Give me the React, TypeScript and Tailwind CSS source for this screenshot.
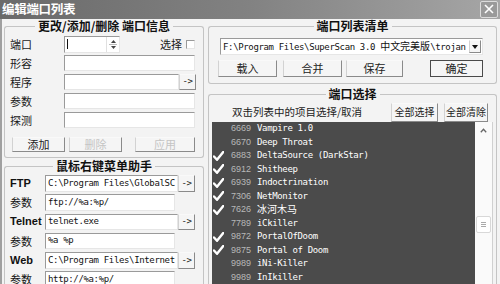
import React from "react";

const sunken =
  "bg-white border border-t-[#9a9a9a] border-l-[#9a9a9a] border-r-[#e6e6e6] border-b-[#e6e6e6]";
const raised =
  "bg-[#f5f5f5] border border-t-[#f9f9f9] border-l-[#d2d2d2] border-r-[#8a8a8a] border-b-[#8a8a8a] flex items-center justify-center";
const mono = "font-['DejaVu_Sans_Mono','Noto_Sans_CJK_SC',monospace] text-[9px] tracking-[-0.35px]";
const cjk = "font-['Noto_Sans_CJK_SC',sans-serif]";

function GroupBox({
  title,
  className,
  bodyClass,
  children,
}: {
  title: string;
  className?: string;
  bodyClass?: string;
  children: React.ReactNode;
}) {
  return (
    <div className={className}>
      <div className="flex items-end h-[14px]">
        <div className="flex-1 h-[7px] border-l border-t border-[#c4c4c4] rounded-tl-[3px]" />
        <span className="px-[3px] text-[12px] font-bold leading-[14px] text-[#111] whitespace-nowrap">{title}</span>
        <div className="flex-1 h-[7px] border-r border-t border-[#c4c4c4] rounded-tr-[3px]" />
      </div>
      <div className={"border-l border-r border-b border-[#c4c4c4] rounded-b-[3px] " + (bodyClass || "")}>{children}</div>
    </div>
  );
}

function Arrow() {
  return (
    <div className={raised + " w-[17px] h-full " + mono + " text-[#222]"}>-&gt;</div>
  );
}

function Row({ label, children }: { label: string; children: React.ReactNode }) {
  return (
    <div className="flex items-center h-[16px]">
      <span className="w-[54px] text-[11px] leading-none text-[#1a1a1a]">{label}</span>
      {children}
    </div>
  );
}

function Check() {
  return (
    <svg width="11" height="10" viewBox="0 0 11 10">
      <path d="M1 5.5 L4 8.8 L10.2 1" fill="none" stroke="#fff" strokeWidth="2.4" strokeLinecap="round" strokeLinejoin="round" />
    </svg>
  );
}

const items: [string, string, boolean][] = [
  ["6669", "Vampire 1.0", false],
  ["6670", "Deep Throat", false],
  ["6883", "DeltaSource (DarkStar)", true],
  ["6912", "Shitheep", true],
  ["6939", "Indoctrination", true],
  ["7306", "NetMonitor", true],
  ["7626", "冰河木马", true],
  ["7789", "iCkiller", false],
  ["9872", "PortalOfDoom", true],
  ["9875", "Portal of Doom", true],
  ["9989", "iNi-Killer", false],
  ["9989", "InIkiller", false],
];

function HelperRow({ label, value, button, bold }: { label: string; value: string; button?: boolean; bold?: boolean }) {
  return (
    <div className="flex items-center h-[16.5px]">
      <span
        className={
          "w-[35px] leading-none text-[#111] " +
          (bold ? "font-['Liberation_Sans',sans-serif] font-bold text-[11px]" : "text-[11px]")
        }
      >
        {label}
      </span>
      <div className={sunken + " h-full flex items-center pl-[2px] overflow-hidden whitespace-nowrap " + (button ? "w-[133px]" : "w-[130px]")}>
        <span className={mono + " text-[#111]"}>{value}</span>
      </div>
      {button && <Arrow />}
    </div>
  );
}

export default function App() {
  return (
    <div className={"w-[500px] h-[284px] overflow-hidden bg-[#f3f3f3] flex flex-col " + cjk}>
      {/* title bar */}
      <div className="h-[19px] shrink-0 flex items-center justify-between bg-linear-to-r from-[#6a6a6a] via-[#828282] to-[#a6a6a6]">
        <span className="pl-[2px] text-[12.5px] font-bold text-white leading-none tracking-[-0.3px]">编辑端口列表</span>
        <div className="w-[18px] h-[17px] mr-[2px] mb-[1px] border border-[#dcdcdc] rounded-[2px] bg-[#9a9a9a] flex items-center justify-center">
          <svg width="10" height="10" viewBox="0 0 10 10">
            <path d="M1 1 L9 9 M9 1 L1 9" stroke="#fff" strokeWidth="1.6" />
          </svg>
        </div>
      </div>

      {/* body */}
      <div className="flex flex-1 border-l-2 border-[#a0a0a0] pl-[2px] gap-[4px]">
        {/* left column */}
        <div className="w-[200px] flex flex-col gap-[1px]">
          <GroupBox title="更改/添加/删除 端口信息" bodyClass="pt-[3px] pb-[5px] pl-[5px] pr-[7px] flex flex-col">
            <div className="flex flex-col gap-[3px]">
              <Row label="端口">
                <div className={sunken + " w-[56px] h-[17px] flex items-center"}>
                  <span className="ml-[2px] w-px h-[10px] bg-[#111]" />
                  <div className="ml-auto w-[13px] h-full flex flex-col items-center justify-center gap-[1px] border-l border-[#e0e0e0]">
                    <svg width="5" height="3" viewBox="0 0 5 3"><path d="M0 3 L2.5 0 L5 3 Z" fill="#444" /></svg>
                    <div className="w-[8px] h-px bg-[#bbb]" />
                    <svg width="5" height="3" viewBox="0 0 5 3"><path d="M0 0 L2.5 3 L5 0 Z" fill="#444" /></svg>
                  </div>
                </div>
                <span className="ml-[40px] text-[11px] leading-none text-[#1a1a1a]">选择</span>
                <div className="ml-[4px] w-[9px] h-[9px] bg-white border border-t-[#9a9a9a] border-l-[#9a9a9a] border-r-[#e6e6e6] border-b-[#e6e6e6]" />
              </Row>
              <Row label="形容">
                <div className={sunken + " w-[131px] h-full"} />
              </Row>
              <Row label="程序">
                <div className={sunken + " w-[115px] h-full"} />
                <Arrow />
              </Row>
              <Row label="参数">
                <div className={sunken + " w-[131px] h-full"} />
              </Row>
              <Row label="探测">
                <div className={sunken + " w-[131px] h-full"} />
              </Row>
            </div>
            <div className="flex mt-[9px] h-[15px] text-[11px] leading-none">
              <div className={raised + " ml-[2px] w-[53px] text-[#222]"}>添加</div>
              <div className={raised + " ml-[4px] w-[53px] text-[#c4c4c4]"}>删除</div>
              <div className={raised + " ml-[13px] w-[60px] text-[#c4c4c4]"}>应用</div>
            </div>
          </GroupBox>

          <GroupBox title="鼠标右键菜单助手" bodyClass="pt-[2px] pb-[4px] pl-[5px] pr-[7px] flex flex-col gap-[2.8px]">
            <HelperRow label="FTP" value="C:\Program Files\GlobalSC" button bold />
            <HelperRow label="参数" value="ftp://%a:%p/" />
            <HelperRow label="Telnet" value="telnet.exe" button bold />
            <HelperRow label="参数" value="%a %p" />
            <HelperRow label="Web" value="C:\Program Files\Internet" button bold />
            <HelperRow label="参数" value="http://%a:%p/" />
          </GroupBox>
        </div>

        {/* right column */}
        <div className="w-[289px] flex flex-col">
          <GroupBox title="端口列表清单" bodyClass="pt-[5px] pb-[6px] flex flex-col">
            <div className={sunken + " ml-[11px] w-[263px] h-[17px] flex items-center pl-[2px] overflow-hidden whitespace-nowrap"}>
              <span className={mono + " text-[#111]"}>
                F:\Program Files\SuperScan 3.0 <span className={cjk + " text-[10px] tracking-normal"}>中文完美版</span>\trojan
              </span>
              <div className={raised + " ml-auto mr-[1px] w-[12px] h-[13px]"}>
                <svg width="6" height="4" viewBox="0 0 6 4"><path d="M0 0 L3 4 L6 0 Z" fill="#111" /></svg>
              </div>
            </div>
            <div className="flex mt-[5px] h-[17px] text-[11px] leading-none text-[#222]">
              <div className={raised + " ml-[9px] w-[59px]"}>载入</div>
              <div className={raised + " ml-[6px] w-[59px]"}>合并</div>
              <div className={raised + " ml-[4px] w-[57px]"}>保存</div>
              <div className="ml-[27px] w-[53px] bg-[#f5f5f5] border border-[#4a4a4a] flex items-center justify-center">确定</div>
            </div>
          </GroupBox>

          <GroupBox title="端口选择" className="mt-[3px]" bodyClass="pt-[1px] flex flex-col h-[200px]">
            <div className="flex items-center h-[20px] text-[10.5px] leading-none text-[#222]">
              <span className="ml-[23px]">双击列表中的项目选择/取消</span>
              <div className={raised + " ml-auto w-[47px] h-[19px] text-[10px]"}>全部选择</div>
              <div className={raised + " ml-[6px] mr-[8px] w-[44px] h-[19px] text-[10px]"}>全部清除</div>
            </div>
            <div className="flex ml-[3px] h-[170px]">
              <div className="w-[263px] bg-[#4b4b4b] flex flex-col">
                {items.map(([num, name, checked], i) => (
                  <div key={i} className="flex items-center h-[13.5px] shrink-0">
                    <div className="w-[19px] pl-[1px] flex items-center">{checked && <Check />}</div>
                    <span className="w-[26px] font-['Liberation_Sans',sans-serif] text-[9px] leading-none text-[#b8b8b8]">{num}</span>
                    <span className={mono + " leading-none text-white whitespace-nowrap"}>
                      {name === "冰河木马" ? <span className={cjk + " text-[10px] tracking-normal"}>{name}</span> : name}
                    </span>
                  </div>
                ))}
              </div>
              <div className="w-[18px] bg-[#fafafa] border-r border-[#d0d0d0] flex flex-col items-center">
                <div className="h-[17px] w-full flex items-center justify-center">
                  <svg width="7" height="5" viewBox="0 0 7 5"><path d="M0.8 4.2 L3.5 1.2 L6.2 4.2" fill="none" stroke="#666" strokeWidth="1.3" /></svg>
                </div>
                <div className="mt-[77px] w-[15px] h-[17px] bg-white border border-[#d8d8d8] rounded-[2px] flex flex-col items-center justify-center gap-[1px]">
                  <div className="w-[5px] h-px bg-[#aaa]" />
                  <div className="w-[5px] h-px bg-[#aaa]" />
                  <div className="w-[5px] h-px bg-[#aaa]" />
                </div>
              </div>
            </div>
          </GroupBox>
        </div>
      </div>
    </div>
  );
}
